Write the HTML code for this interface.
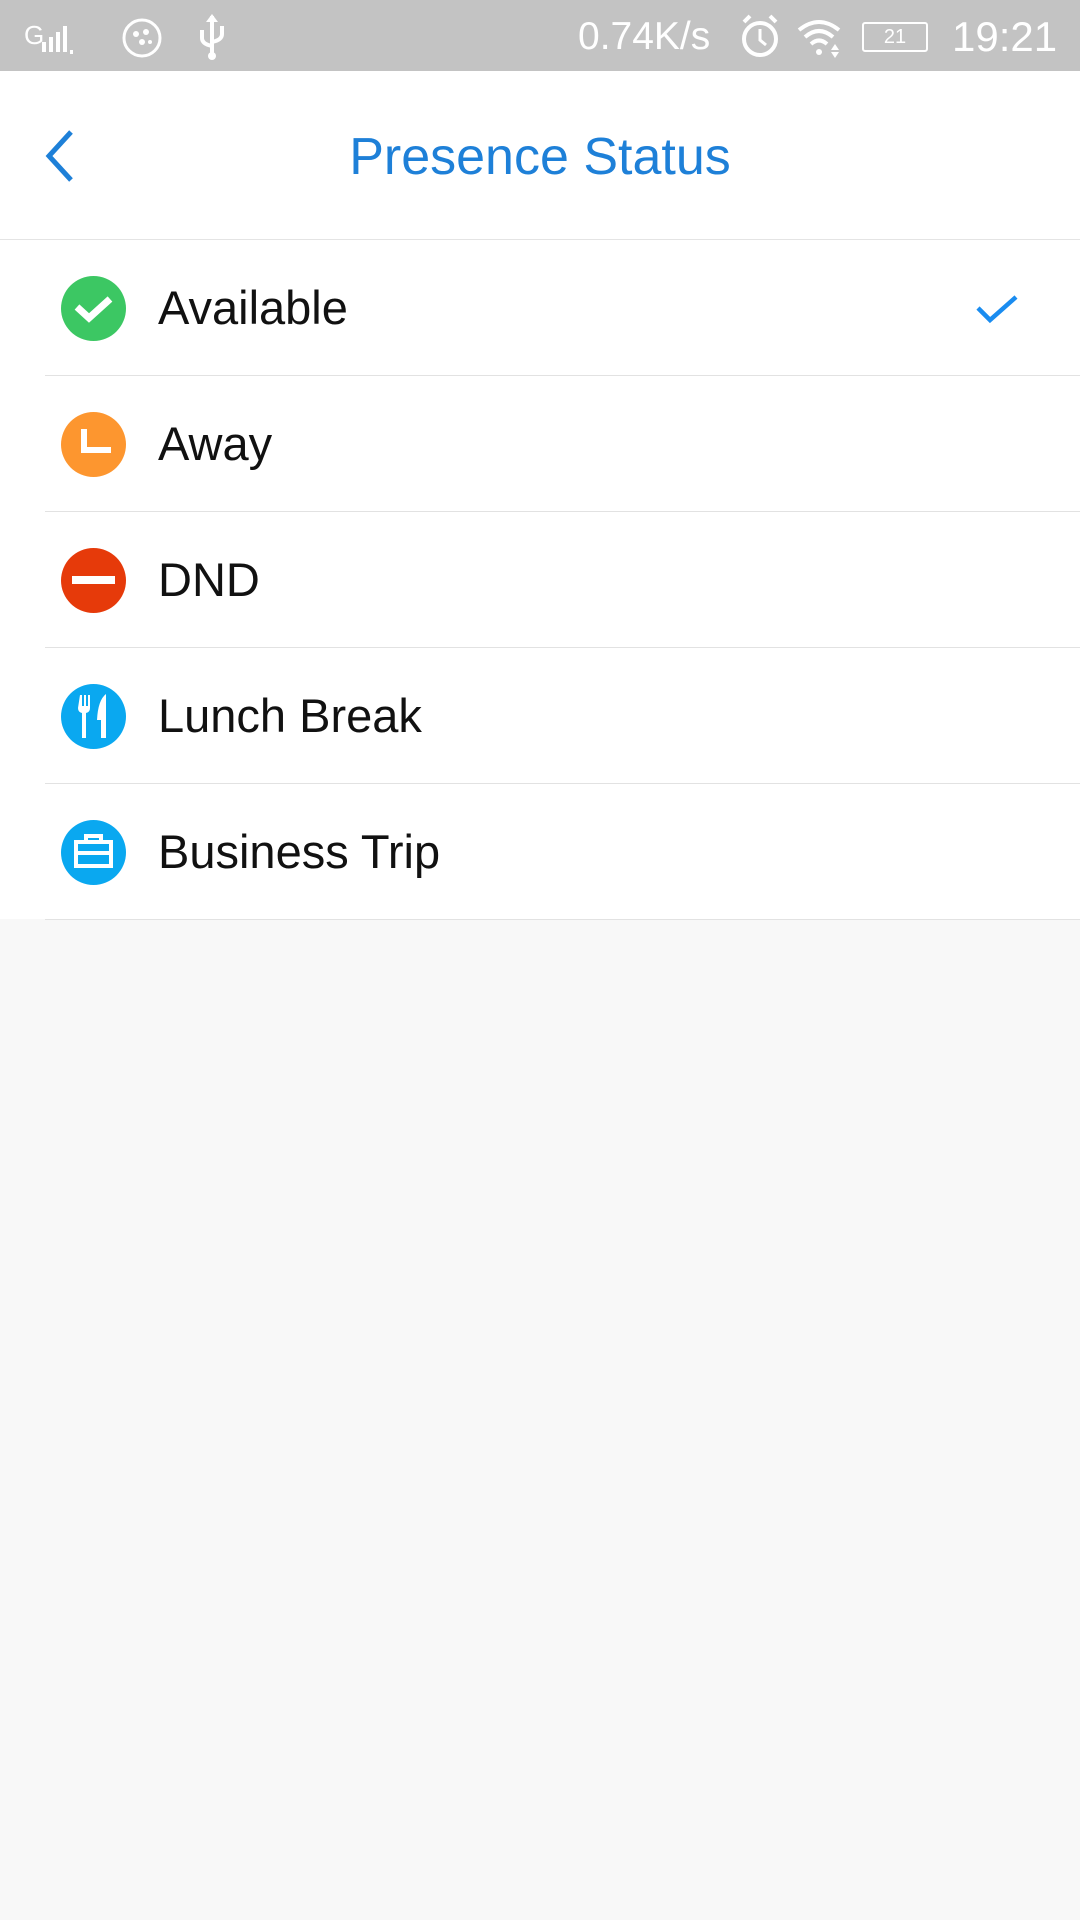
<!DOCTYPE html>
<html><head><meta charset="utf-8"><style>
body{margin:0;width:1080px;height:1920px;background:#f8f8f8;font-family:"Liberation Sans",sans-serif;position:relative;overflow:hidden}
.sb{position:absolute;left:0;top:0;width:1080px;height:71px;background:#c3c3c3;color:#fff}
.hdr{position:absolute;top:71px;left:0;width:1080px;height:168px;background:#fff;border-bottom:1px solid #e4e4e4}
.title{position:absolute;left:0;right:0;top:127px;text-align:center;font-size:52px;color:#1e80d8;line-height:60px}
.list{position:absolute;top:240px;left:0;width:1080px;height:679px;background:#fff}
.row{position:absolute;left:0;width:1080px;height:136px}
.row .line{position:absolute;left:45px;right:0;bottom:0;height:1px;background:#e2e2e2}
.row .ic{position:absolute;left:61px;top:36px;width:65px;height:65px}
.row .t{position:absolute;left:158px;top:40px;font-size:47px;color:#111;line-height:56px}
</style></head><body>
<div class="sb">
<div style="position:absolute;left:24px;top:20px;font-size:26px">G</div>
<svg style="position:absolute;left:40px;top:20px" width="60" height="36"><g fill="#fff"><rect x="2" y="22" width="4" height="10"/><rect x="9" y="17" width="4" height="15"/><rect x="16" y="12" width="4" height="20"/><rect x="23" y="6" width="4" height="26"/><rect x="30" y="30" width="3" height="4"/></g></svg>
<svg style="position:absolute;left:120px;top:16px" width="44" height="44"><circle cx="22" cy="22" r="18" fill="none" stroke="#fff" stroke-width="3"/><g fill="#fff"><circle cx="16" cy="18" r="3"/><circle cx="26" cy="16" r="3"/><circle cx="22" cy="26" r="3"/><circle cx="30" cy="26" r="2"/></g></svg>
<svg style="position:absolute;left:192px;top:12px" width="40" height="50"><path d="M20 4V46M10 18V26Q10 32 20 34M30 14V22Q30 28 20 30" stroke="#fff" stroke-width="4" fill="none"/><path d="M14 10L20 2L26 10Z" fill="#fff"/><circle cx="20" cy="44" r="4" fill="#fff"/></svg>
<div style="position:absolute;left:578px;top:15px;font-size:39px">0.74K/s</div>
<svg style="position:absolute;left:738px;top:12px" width="44" height="48"><circle cx="22" cy="27" r="16" fill="none" stroke="#fff" stroke-width="4"/><path d="M22 17V28L28 33" stroke="#fff" stroke-width="3" fill="none"/><path d="M6 10L12 4M38 10L32 4" stroke="#fff" stroke-width="4"/></svg>
<svg style="position:absolute;left:795px;top:16px" width="50" height="42"><path d="M4 14Q24 -2 44 14M10 21Q24 9 38 21M16 28Q24 21 32 28" stroke="#fff" stroke-width="4" fill="none"/><circle cx="24" cy="36" r="3" fill="#fff"/><path d="M40 28L44 34H36Z M40 42L44 36H36Z" fill="#fff"/></svg>
<div style="position:absolute;left:862px;top:22px;width:62px;height:26px;border:2px solid #fff;border-radius:3px;font-size:20px;text-align:center;line-height:26px">21</div>
<div style="position:absolute;left:952px;top:13px;font-size:42px">19:21</div>
</div>
<div class="hdr"></div>
<svg style="position:absolute;left:38px;top:128px" width="40" height="56"><path d="M33 4L11 28L33 52" stroke="#1e80d8" stroke-width="5" fill="none"/></svg>
<div class="title">Presence Status</div>
<div class="list">
<div class="row" style="top:0"><svg class="ic" viewBox="0 0 65 65"><circle cx="32.5" cy="32.5" r="32.5" fill="#3cc763"/><path d="M16 31L28 42L49 23" stroke="#fff" stroke-width="7" fill="none"/></svg><div class="t">Available</div>
<svg style="position:absolute;left:975px;top:54px" width="44" height="32"><path d="M3 14L15 26L41 3" stroke="#1a8cf0" stroke-width="4.5" fill="none"/></svg><div class="line"></div></div>
<div class="row" style="top:136px"><svg class="ic" viewBox="0 0 65 65"><circle cx="32.5" cy="32.5" r="32.5" fill="#fd962f"/><path d="M23 17V38H50" stroke="#fff" stroke-width="6" fill="none"/></svg><div class="t">Away</div><div class="line"></div></div>
<div class="row" style="top:272px"><svg class="ic" viewBox="0 0 65 65"><circle cx="32.5" cy="32.5" r="32.5" fill="#e63a0a"/><rect x="11" y="28" width="43" height="8" fill="#fff"/></svg><div class="t">DND</div><div class="line"></div></div>
<div class="row" style="top:408px"><svg class="ic" viewBox="0 0 65 65"><circle cx="32.5" cy="32.5" r="32.5" fill="#0aa8f0"/><g fill="#fff"><path d="M19 11h2v11h2V11h2v11h2V11h2v13q0 4-4 5v25h-4V29q-4-1-4-5z"/><path d="M45 10v44h-5V36h-4q1-20 9-26z"/></g></svg><div class="t">Lunch Break</div><div class="line"></div></div>
<div class="row" style="top:544px"><svg class="ic" viewBox="0 0 65 65"><circle cx="32.5" cy="32.5" r="32.5" fill="#0aa8f0"/><g fill="none" stroke="#fff" stroke-width="4"><rect x="15" y="22" width="35" height="24"/><path d="M25 22V16H40V22M15 33H50"/></g></svg><div class="t">Business Trip</div><div class="line"></div></div>
</div>
</body></html>
